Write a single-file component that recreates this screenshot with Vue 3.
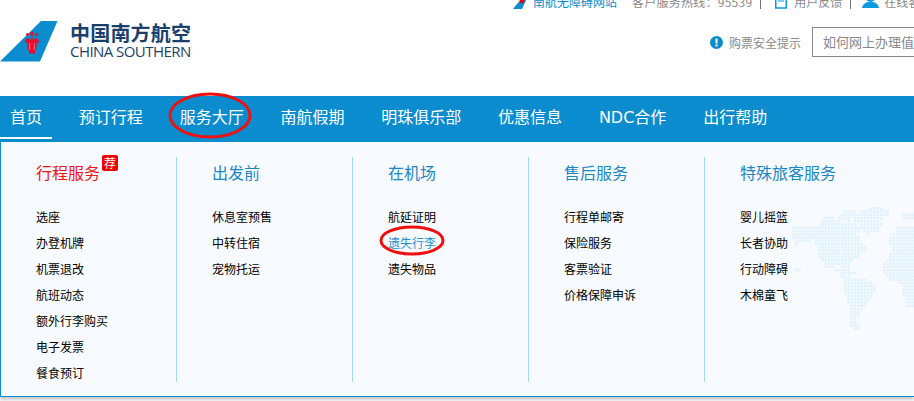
<script setup>
const navItems = ['首页', '预订行程', '服务大厅', '南航假期', '明珠俱乐部', '优惠信息', 'NDC合作', '出行帮助']
const columns = [
  { title: '行程服务', hot: true, items: ['选座', '办登机牌', '机票退改', '航班动态', '额外行李购买', '电子发票', '餐食预订'] },
  { title: '出发前', items: ['休息室预售', '中转住宿', '宠物托运'] },
  { title: '在机场', items: ['航延证明', '遗失行李', '遗失物品'], active: '遗失行李' },
  { title: '售后服务', items: ['行程单邮寄', '保险服务', '客票验证', '价格保障申诉'] },
  { title: '特殊旅客服务', items: ['婴儿摇篮', '长者协助', '行动障碍', '木棉童飞'] }
]
const spans = [
  [[24,27]],[[16,19],[21,29]],[[15,19],[20,29],[34,38]],[[10,12],[14,17],[19,27],[34,38]],
  [[9,14],[17,17],[19,26]],[[9,13],[14,19],[21,27]],[[0,20],[21,26],[32,38]],[[0,20],[22,26],[32,38]],
  [[0,19],[23,23],[31,38]],[[0,5],[6,20],[30,38]],[[1,5],[7,20],[30,38]],[[1,1],[7,21],[30,38]],
  [[8,22],[31,38]],[[8,22],[31,38]],[[8,20],[30,38]],[[8,20],[30,38]],[[9,18],[29,38]],[[10,17],[28,38]],
  [[10,12],[15,17],[28,38]],[[1,2],[13,17],[28,38]],[[15,19],[28,38]],[[15,17],[29,38]],[[16,22],[30,38]],
  [[16,24],[33,38]],[[16,25],[34,38]],[[16,25],[34,38]],[[16,24],[34,38]],[[17,24],[34,38]],[[17,23],[35,38]],
  [[17,22],[35,38]],[[18,22],[35,38]],[[18,21]],[[18,20]],[[18,20]],[[18,19]],[[18,19]],[[18,20]],[[19,20]]
]
const dots = []
spans.forEach((row, r) => row.forEach(([a, b]) => {
  for (let c = a; c <= b; c++) dots.push({ x: c * 3.25, y: r * 3.25 })
}))
</script>

<template>
  <div class="page">
    <div class="topbar">
      <svg class="plane" width="14" height="11" viewBox="0 0 14 11"><path d="M9 0h5l-5 11H0z" fill="#0a8cce"/><circle cx="9" cy="3" r="2.4" fill="#e60012"/></svg>
      <span class="accessible">南航无障碍网站</span>
      <span class="hotline">客户服务热线：95539</span>
      <i class="sep"></i>
      <svg class="doc" width="12" height="14" viewBox="0 0 12 14"><rect x=".75" y="-2" width="10.5" height="15" fill="none" stroke="#0a9ae0" stroke-width="1.5"/><path d="M3 3h6M3 6h6" stroke="#0a9ae0"/></svg>
      <span class="plain">用户反馈</span>
      <i class="sep"></i>
      <svg class="agent" width="17" height="14" viewBox="0 0 17 14"><circle cx="8.5" cy="2" r="5" fill="#0a9ae0"/><path d="M0 13q1-5 6-6h5q5 1 6 6z" fill="#0a9ae0"/></svg>
      <span class="plain">在线客服</span>
    </div>

    <header class="header">
      <div class="logo">
        <svg class="tail" width="58" height="41" viewBox="0 0 58 41">
          <path d="M41 0h16.500L40 40.500H0z" fill="#0a8cce"/>
          <g fill="#e60f2d">
            <path d="M24.500 19.500 28 17l4 2 4-2 3.500 2.500-3 3.500q.5 5-1.500 7.500v2h-6v-2q-2-2.500-1.500-7.500z"/>
            <circle cx="32" cy="12.500" r="1.800"/><circle cx="27.500" cy="13.500" r="1.500"/><circle cx="36.500" cy="13.500" r="1.500"/>
            <rect x="31.400" y="13" width="1.200" height="6"/>
          </g>
          <path d="M29.700 22v7M34.300 22v7" stroke="#f7a0a8" stroke-width=".7"/>
        </svg>
        <div class="wordmark">
          <div class="cn">中国南方航空</div>
          <div class="en">CHINA SOUTHERN</div>
        </div>
      </div>
      <div class="safety">
        <svg class="info" width="13" height="13" viewBox="0 0 13 13"><circle cx="6.500" cy="6.500" r="6.500" fill="#0a8cce"/><rect x="5.500" y="2.500" width="2" height="5" fill="#fff"/><rect x="5.500" y="8.500" width="2" height="2" fill="#fff"/></svg>
        <span class="safety-text">购票安全提示</span>
        <div class="search">如何网上办理值机</div>
      </div>
    </header>

    <nav class="nav">
      <a v-for="(item, i) in navItems" :key="item" class="nav-item" :class="{ current: i === 0 }">{{ item }}</a>
    </nav>

    <section class="panel">
      <svg class="map" width="124" height="125" viewBox="0 0 124 125">
        <rect v-for="(d, i) in dots" :key="i" :x="d.x" :y="d.y" width="2.600" height="2.600" fill="#e2f2fc"/>
      </svg>
      <div class="cols">
        <div v-for="col in columns" :key="col.title" class="col">
          <h3 class="col-title" :class="{ hot: col.hot }">
            {{ col.title }}<span v-if="col.hot" class="badge">荐</span>
          </h3>
          <ul class="list">
            <li v-for="item in col.items" :key="item" :class="{ active: item === col.active }">{{ item }}</li>
          </ul>
        </div>
      </div>
    </section>

    <svg class="marks" width="914" height="401" viewBox="0 0 914 401">
      <ellipse cx="210" cy="115.500" rx="40" ry="21.500" fill="none" stroke="#f01010" stroke-width="3"/>
      <ellipse cx="412" cy="240.500" rx="31" ry="13.500" fill="none" stroke="#f01010" stroke-width="3"/>
    </svg>
  </div>
</template>

<style scoped>
.page {
  position: relative;
  width: 914px;
  height: 401px;
  overflow: hidden;
  background: #fff;
  font-family: "Noto Sans CJK SC", "Noto Sans", sans-serif;
  font-size: 12px;
}
.topbar {
  display: flex;
  align-items: flex-end;
  height: 9px;
  padding-left: 513px;
  overflow: hidden;
  white-space: nowrap;
  line-height: 14px;
  color: #888;
}
.topbar > * { flex: none; }
.plane { margin-right: 6px; }
.accessible { color: #0a8cce; margin-right: 15px; }
.hotline { letter-spacing: .25px; }
.sep { width: 1px; height: 14px; background: #777; margin: 0 14px 0 8px; }
.doc { margin-right: 7px; }
.agent { margin-left: -3px; margin-right: 5px; }
.header {
  display: flex;
  justify-content: space-between;
  height: 87px;
}
.logo { display: flex; padding-top: 12px; }
.tail { flex: none; }
.wordmark { margin-left: 12px; padding-top: 1px; color: #1b3f6d; }
.cn { font-size: 20px; line-height: 22px; font-weight: 700; letter-spacing: .2px; }
.en { font-family: "Open Sans", sans-serif; font-size: 15px; line-height: 15px; letter-spacing: -.55px; white-space: nowrap; }
.safety { display: flex; align-items: center; align-self: flex-start; margin-top: 18px; width: 204px; flex: none; color: #888; white-space: nowrap; }
.info { flex: none; }
.safety-text { flex: none; margin-left: 6px; }
.search {
  flex: none;
  width: 180px;
  height: 30px;
  margin-left: 11px;
  padding-left: 10px;
  box-sizing: border-box;
  border: 1px solid #888;
  font-size: 13px;
  line-height: 28px;
}
.nav {
  display: flex;
  gap: 16.800px;
  height: 46px;
  background: #0a8cce;
}
.nav-item {
  height: 43px;
  padding: 0 10px;
  box-sizing: border-box;
  color: #fff;
  font-family: "DejaVu Sans", "Noto Sans CJK SC", sans-serif;
  font-size: 16px;
  line-height: 43px;
  white-space: nowrap;
}
.nav-item.current { border-bottom: 2px solid #fff; }
.panel {
  position: relative;
  height: 255px;
  box-sizing: border-box;
  padding-top: 15px;
  border-left: 1px solid #0a8cce;
  border-bottom: 1px solid #0a8cce;
  background: #f7fbff;
  box-shadow: 0 3px 3px #ccc;
}
.map { position: absolute; left: 791px; top: 65px; }
.cols { position: relative; display: flex; }
.col {
  flex: none;
  width: 176px;
  height: 225px;
  box-sizing: border-box;
  padding-left: 35px;
  border-right: 1px solid #a6d6fb;
}
.col:last-child { border-right: 0; }
.col-title {
  position: relative;
  margin: 0 0 15px;
  height: 32px;
  font-size: 16px;
  font-weight: 400;
  line-height: 30px;
  color: #1a87c4;
}
.col-title.hot { color: #f01414; }
.badge {
  position: absolute;
  left: 66px;
  top: -2px;
  width: 16px;
  height: 16px;
  border-radius: 2px;
  background: #f00000;
  color: #fff;
  font-size: 12px;
  line-height: 16px;
  text-align: center;
}
.list { margin: 0; padding: 0; list-style: none; color: #000; }
.list li { height: 26px; line-height: 26px; white-space: nowrap; }
.list li.active { color: #1f8fd0; }
.marks { position: absolute; left: 0; top: 0; pointer-events: none; }
</style>

<style>
html, body { margin: 0; padding: 0; overflow: hidden; }
</style>
